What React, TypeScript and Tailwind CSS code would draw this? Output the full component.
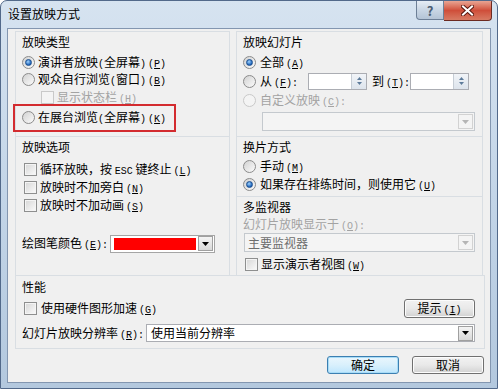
import React from 'react';

const Radio = ({ checked, disabled }: { checked?: boolean; disabled?: boolean }) => (
  <span
    className={
      disabled
        ? 'w-[13px] h-[13px] shrink-0 rounded-full border border-[#c9c9c9] bg-[#f4f4f4]'
        : 'w-[13px] h-[13px] shrink-0 rounded-full border border-[#8b8b8b] bg-gradient-to-br from-[#d2d2d2] to-[#fbfbfb] flex items-center justify-center'
    }
  >
    {checked && <span className="w-[7px] h-[7px] rounded-full bg-[radial-gradient(circle_at_40%_35%,#9fd3ff,#1d62b8_70%)] border border-[#1b4f8f]" />}
  </span>
);

const Check = ({ disabled }: { disabled?: boolean }) => (
  <span
    className={
      disabled
        ? 'w-[13px] h-[13px] shrink-0 border border-[#c9c9c9] bg-[#f4f4f4]'
        : 'w-[13px] h-[13px] shrink-0 border border-[#8e8f8f] bg-gradient-to-br from-[#d6d6d6] to-[#fbfbfb] shadow-[inset_0_0_0_1px_#f4f4f4]'
    }
  />
);

const Arrow = ({ color = '#000' }: { color?: string }) => (
  <svg width="7" height="4" viewBox="0 0 7 4">
    <path d="M0 0h7L3.5 4z" fill={color} />
  </svg>
);

const DropBtn = ({ disabled }: { disabled?: boolean }) => (
  <span
    className={
      disabled
        ? 'w-[15px] h-[15px] my-[1px] mr-[1px] shrink-0 border border-[#d2d2d2] bg-[#f4f4f4] flex items-center justify-center'
        : 'w-[15px] h-[15px] my-[1px] mr-[1px] shrink-0 border border-[#a0a0a0] bg-gradient-to-b from-[#f4f4f4] to-[#d9d9d9] flex items-center justify-center'
    }
  >
    <Arrow color={disabled ? '#b5b5b5' : '#000'} />
  </span>
);

const Spinner = () => (
  <span className="w-[59px] h-[17px] shrink-0 border border-[#abadb3] bg-white flex justify-end">
    <span className="w-[15px] h-full border-l border-[#c6cdd5] bg-gradient-to-b from-[#f1f4f8] to-[#dde4ec] flex flex-col items-center justify-center gap-[2px]">
      <svg width="5" height="3" viewBox="0 0 5 3">
        <path d="M0 3h5L2.5 0z" fill="#5d7b9a" />
      </svg>
      <svg width="5" height="3" viewBox="0 0 5 3">
        <path d="M0 0h5L2.5 3z" fill="#5d7b9a" />
      </svg>
    </span>
  </span>
);

// half-width ascii in 6px cells, like SimSun
const A = ({ children }: { children: React.ReactNode }) => (
  <span className="font-['Liberation_Mono',monospace] text-[10px]">{children}</span>
);

const Key = ({ k, colon }: { k: string; colon?: boolean }) => (
  <span className="ml-[2px] font-['Liberation_Mono',monospace] text-[10px]">
    (<u>{k}</u>){colon ? ':' : ''}
  </span>
);

const Header = ({ children }: { children: React.ReactNode }) => (
  <div className="h-[18px] leading-[18px] pl-[6px] mt-[1px]">{children}</div>
);

export default function App() {
  return (
    <div className="w-[498px] h-[389px] flex flex-col bg-gradient-to-b from-[#d6e3f0] via-[#c3d5e8] to-[#b3c8de] border border-[#52698a] rounded-t-[7px] text-[12px] text-black font-['Noto_Sans_CJK_SC','Microsoft_YaHei',sans-serif] whitespace-nowrap overflow-hidden">
      {/* title bar */}
      <div className="h-[27px] flex items-start justify-between">
        <div className="pl-[7px] pt-[5px] leading-[16px]">设置放映方式</div>
        <div className="flex mr-[5px]">
          <div className="w-[28px] h-[19px] border border-[#6d7f96] border-t-0 rounded-bl-[4px] bg-gradient-to-b from-[#e6edf5] via-[#c9d6e4] to-[#b4c4d6] flex items-center justify-center text-[13px] font-bold text-[#4b5c72] leading-none">
            ?
          </div>
          <div className="w-[48px] h-[20px] border border-[#6b2a22] border-t-0 border-l-0 rounded-br-[4px] bg-gradient-to-b from-[#e8a493] via-[#cf4e3a] to-[#d77a63] flex items-center justify-center">
            <svg width="13" height="11" viewBox="0 0 13 11">
              <path d="M2 1.5l9 8M11 1.5l-9 8" stroke="#5b1a12" strokeWidth="4" strokeLinecap="square" />
              <path d="M2 1.5l9 8M11 1.5l-9 8" stroke="#ffffff" strokeWidth="2" strokeLinecap="square" />
            </svg>
          </div>
        </div>
      </div>

      {/* client area */}
      <div className="mx-[6px] mb-[5px] flex-1 bg-[#f0f0f0] border border-[#8396b0] pl-[7px] pr-[5px] pt-[2px] flex flex-col">
        <div className="flex gap-[6px]">
          {/* left column */}
          <div className="w-[215px] flex flex-col">
            <div className="h-[105px] border-t border-x border-[#d9dee3] relative">
              <Header>放映类型</Header>
              <div className="h-[18px] mt-[2px] pl-[6px] flex items-center gap-[3px]">
                <Radio checked />
                <span>演讲者放映<A>(</A>全屏幕<A>)</A><Key k="P" /></span>
              </div>
              <div className="h-[17px] pl-[6px] flex items-center gap-[3px]">
                <Radio />
                <span>观众自行浏览<A>(</A>窗口<A>)</A><Key k="B" /></span>
              </div>
              <div className="h-[18px] pl-[25px] flex items-center gap-[3px] text-[#a3a3a3]">
                <Check disabled />
                <span>显示状态栏<Key k="H" /></span>
              </div>
              <div className="h-[18px] mt-[2px] pl-[6px] flex items-center gap-[3px]">
                <Radio />
                <span>在展台浏览<A>(</A>全屏幕<A>)</A><Key k="K" /></span>
              </div>
              <div className="absolute left-[-3px] top-[72px] w-[163px] h-[28px] border-2 border-[#d32b2f]" />
            </div>
            <div className="h-[139px] border-t border-x border-[#d9dee3]">
              <Header>放映选项</Header>
              <div className="mt-[4px] h-[18px] pl-[8px] flex items-center gap-[3px]">
                <Check />
                <span>
                  循环放映，按 <A>ESC</A> 键终止<Key k="L" />
                </span>
              </div>
              <div className="h-[18px] pl-[8px] flex items-center gap-[3px]">
                <Check />
                <span>放映时不加旁白<Key k="N" /></span>
              </div>
              <div className="h-[18px] pl-[8px] flex items-center gap-[3px]">
                <Check />
                <span>放映时不加动画<Key k="S" /></span>
              </div>
              <div className="mt-[20px] h-[19px] pl-[6px] flex items-center">
                <span className="w-[88px] shrink-0">绘图笔颜色<Key k="E" colon /></span>
                <span className="w-[105px] h-[18px] border border-[#a5a5a5] bg-white flex items-center">
                  <span className="ml-[3px] w-[82px] h-[12px] bg-[#ff0000]" />
                  <span className="ml-auto">
                    <DropBtn />
                  </span>
                </span>
              </div>
            </div>
          </div>

          {/* right column */}
          <div className="w-[247px] flex flex-col">
            <div className="h-[105px] border-t border-x border-[#d9dee3]">
              <Header>放映幻灯片</Header>
              <div className="h-[18px] mt-[2px] pl-[6px] flex items-center gap-[4px]">
                <Radio checked />
                <span>全部<Key k="A" /></span>
              </div>
              <div className="h-[18px] mt-[1px] pl-[6px] flex items-center">
                <Radio />
                <span className="ml-[4px] w-[48px] shrink-0">从<Key k="F" colon /></span>
                <Spinner />
                <span className="ml-[5px] w-[38px] shrink-0">到<Key k="T" colon /></span>
                <Spinner />
              </div>
              <div className="h-[18px] mt-[1px] pl-[6px] flex items-center gap-[4px] text-[#a3a3a3]">
                <Radio disabled />
                <span>自定义放映<Key k="C" colon /></span>
              </div>
              <div className="ml-[25px] mt-[3px] w-[213px] h-[19px] border border-[#c4c9ce] bg-[#f4f4f4] flex justify-end items-center">
                <DropBtn disabled />
              </div>
            </div>
            <div className="h-[60px] border-t border-x border-[#d9dee3]">
              <Header>换片方式</Header>
              <div className="h-[18px] mt-[1px] pl-[6px] flex items-center gap-[4px]">
                <Radio />
                <span>手动<Key k="M" /></span>
              </div>
              <div className="h-[18px] pl-[6px] flex items-center gap-[4px]">
                <Radio checked />
                <span>如果存在排练时间，则使用它<Key k="U" /></span>
              </div>
            </div>
            <div className="h-[79px] border-t border-x border-[#d9dee3]">
              <Header>多监视器</Header>
              <div className="h-[16px] leading-[16px] pl-[6px] text-[#a3a3a3]">
                幻灯片放映显示于<Key k="O" colon />
              </div>
              <div className="ml-[7px] mt-[1px] w-[231px] h-[19px] border border-[#c4c9ce] bg-[#f4f4f4] flex items-center">
                <span className="pl-[3px] text-[#6d6d6d]">主要监视器</span>
                <span className="ml-auto">
                  <DropBtn disabled />
                </span>
              </div>
              <div className="h-[18px] mt-[3px] pl-[8px] flex items-center gap-[3px]">
                <Check />
                <span>显示演示者视图<Key k="W" /></span>
              </div>
            </div>
          </div>
        </div>

        {/* performance */}
        <div className="h-[74px] border border-[#d9dee3]">
          <div className="h-[18px] leading-[18px] pl-[6px] mt-[2px]">性能</div>
          <div className="h-[19px] mt-[3px] pl-[8px] pr-[9px] flex items-center gap-[4px]">
            <Check />
            <span>使用硬件图形加速<Key k="G" /></span>
            <button className="ml-auto w-[71px] h-[19px] rounded-[3px] border border-[#707070] bg-gradient-to-b from-[#f2f2f2] via-[#e9e9e9] to-[#d2d2d2] shadow-[inset_0_0_0_1px_#fcfcfc] leading-[16px]">
              提示<Key k="I" />
            </button>
          </div>
          <div className="h-[18px] mt-[6px] pl-[6px] pr-[9px] flex items-center">
            <span className="w-[124px] shrink-0">幻灯片放映分辨率<Key k="R" colon /></span>
            <span className="flex-1 h-[18px] border border-[#abadb3] bg-white flex items-center">
              <span className="pl-[4px]">使用当前分辨率</span>
              <span className="ml-auto">
                <DropBtn />
              </span>
            </span>
          </div>
        </div>

        {/* buttons */}
        <div className="mt-[7px] flex justify-end gap-[13px] pr-[1px]">
          <button className="w-[72px] h-[18px] rounded-[3px] border border-[#3c7fb1] bg-gradient-to-b from-[#eaf6fd] via-[#d9f0fc] to-[#bee6fd] shadow-[inset_0_0_0_1px_#a8dcf7] leading-[16px]">
            确定
          </button>
          <button className="w-[72px] h-[18px] rounded-[3px] border border-[#707070] bg-gradient-to-b from-[#f2f2f2] via-[#e9e9e9] to-[#d2d2d2] shadow-[inset_0_0_0_1px_#fcfcfc] leading-[16px]">
            取消
          </button>
        </div>
      </div>
    </div>
  );
}
